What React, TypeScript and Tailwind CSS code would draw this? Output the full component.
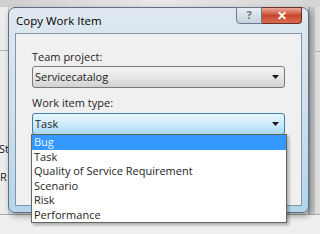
import React from "react";

const font = { fontFamily: '"Open Sans", "Noto Sans", sans-serif' };

function Arrow() {
  return (
    <svg width="7" height="4" viewBox="0 0 7 4" className="block">
      <path d="M0 0 H7 L3.5 4 Z" fill="#1a1a1a" />
    </svg>
  );
}

const items = ["Bug", "Task", "Quality of Service Requirement", "Scenario", "Risk", "Performance"];

export default function App() {
  return (
    <div className="relative w-[320px] h-[234px] overflow-hidden bg-[#e4e4e4] text-[11px] text-[#1e1e1e]" style={font}>
      {/* desktop background */}
      <div className="flex flex-col h-full">
        <div className="h-[7px] bg-gradient-to-r from-[#cfcfcf] via-[#e8e8e8] to-[#d4d4d4]" />
        <div className="flex flex-1">
          <div className="w-[9px] flex flex-col bg-[#ececec] border-r border-[#c8c8c8]">
            <div className="h-[43px]" />
            <div className="h-px bg-[#b4b4b4]" />
            <div className="h-[92px]" />
            <div className="leading-[12px] -ml-[1px] text-[#222]">St</div>
            <div className="h-[16px]" />
            <div className="leading-[12px] text-[#222]">R</div>
          </div>
          <div className="flex-1" />
          <div className="w-[12px] flex">
            <div className="w-[2px] bg-[#9fb0bd]" />
            <div className="w-[5px] bg-[#c4c4c4]" />
            <div className="flex-1 bg-[#dedede] flex flex-col">
              <div className="h-[44px]" />
              <div className="h-px bg-[#b0b0b0]" />
            </div>
          </div>
        </div>
        <div className="h-px bg-[#a8a8a8]" />
        <div className="h-[19px] bg-[#efefef]" />
      </div>

      {/* dialog window */}
      <div className="absolute left-[8px] top-[7px] w-[301px] h-[206px] rounded-[7px] border border-[#5d6f80] bg-gradient-to-b from-[#dfe8f0] via-[#cfdfeb] to-[#b3d6ee] shadow-[2px_3px_6px_rgba(0,0,0,0.35)] flex flex-col">
        <div className="h-[25px] flex items-center pl-[7px] text-[11.5px] text-black">Copy Work Item</div>
        <div className="flex-1 mx-[6px] mb-[6px] border border-[#8396a8] bg-[#f0f0f0] flex flex-col pl-[16px] pr-[16px]">
          <div className="h-[16px]" />
          <div className="leading-[14px]">Team project:</div>
          <div className="h-[1px]" />
          <div className="mt-[1px] h-[22px] rounded-[3px] border border-[#7a7a7a] bg-gradient-to-b from-[#f4f4f4] via-[#e6e6e6] to-[#d2d2d2] flex items-center justify-between pl-[2px] pr-[5px]">
            <span>Servicecatalog</span>
            <Arrow />
          </div>
          <div className="h-[8px]" />
          <div className="leading-[14px]">Work item type:</div>
          <div className="h-[3px]" />
          <div className="h-[22px] rounded-[3px] border border-[#3c7fb1] bg-gradient-to-b from-[#eaf6fd] via-[#cdebfb] to-[#a9daf5] flex items-center justify-between pl-[2px] pr-[5px]">
            <span>Task</span>
            <Arrow />
          </div>
        </div>
        {/* caption buttons */}
        <div className="absolute right-[6px] -top-[1px] flex h-[17px]">
          <div className="w-[26px] h-full rounded-bl-[4px] border border-[#6c7b89] bg-gradient-to-b from-[#e8eef3] via-[#d6e0e8] to-[#c3d2de] flex items-center justify-center text-[11px] font-bold text-[#6b7680]">?</div>
          <div className="w-[40px] h-full rounded-br-[4px] border border-l-0 border-[#6b3026] bg-gradient-to-b from-[#e9a99b] via-[#c9462d] to-[#d66d52] flex items-center justify-center text-[12px] font-bold text-white">✕</div>
        </div>
      </div>

      {/* open dropdown list */}
      <div className="absolute left-[31px] top-[134px] w-[256px] h-[89px] bg-white border border-[#646464] shadow-[2px_2px_3px_rgba(0,0,0,0.3)] flex flex-col">
        {items.map((it, i) => (
          <div
            key={it}
            className={
              i === 0
                ? "h-[14.6px] leading-[14.6px] pl-[2px] bg-[#3399ff] text-[#e8f2ff]"
                : "h-[14.6px] leading-[14.6px] pl-[2px]"
            }
          >
            {it}
          </div>
        ))}
      </div>
    </div>
  );
}
